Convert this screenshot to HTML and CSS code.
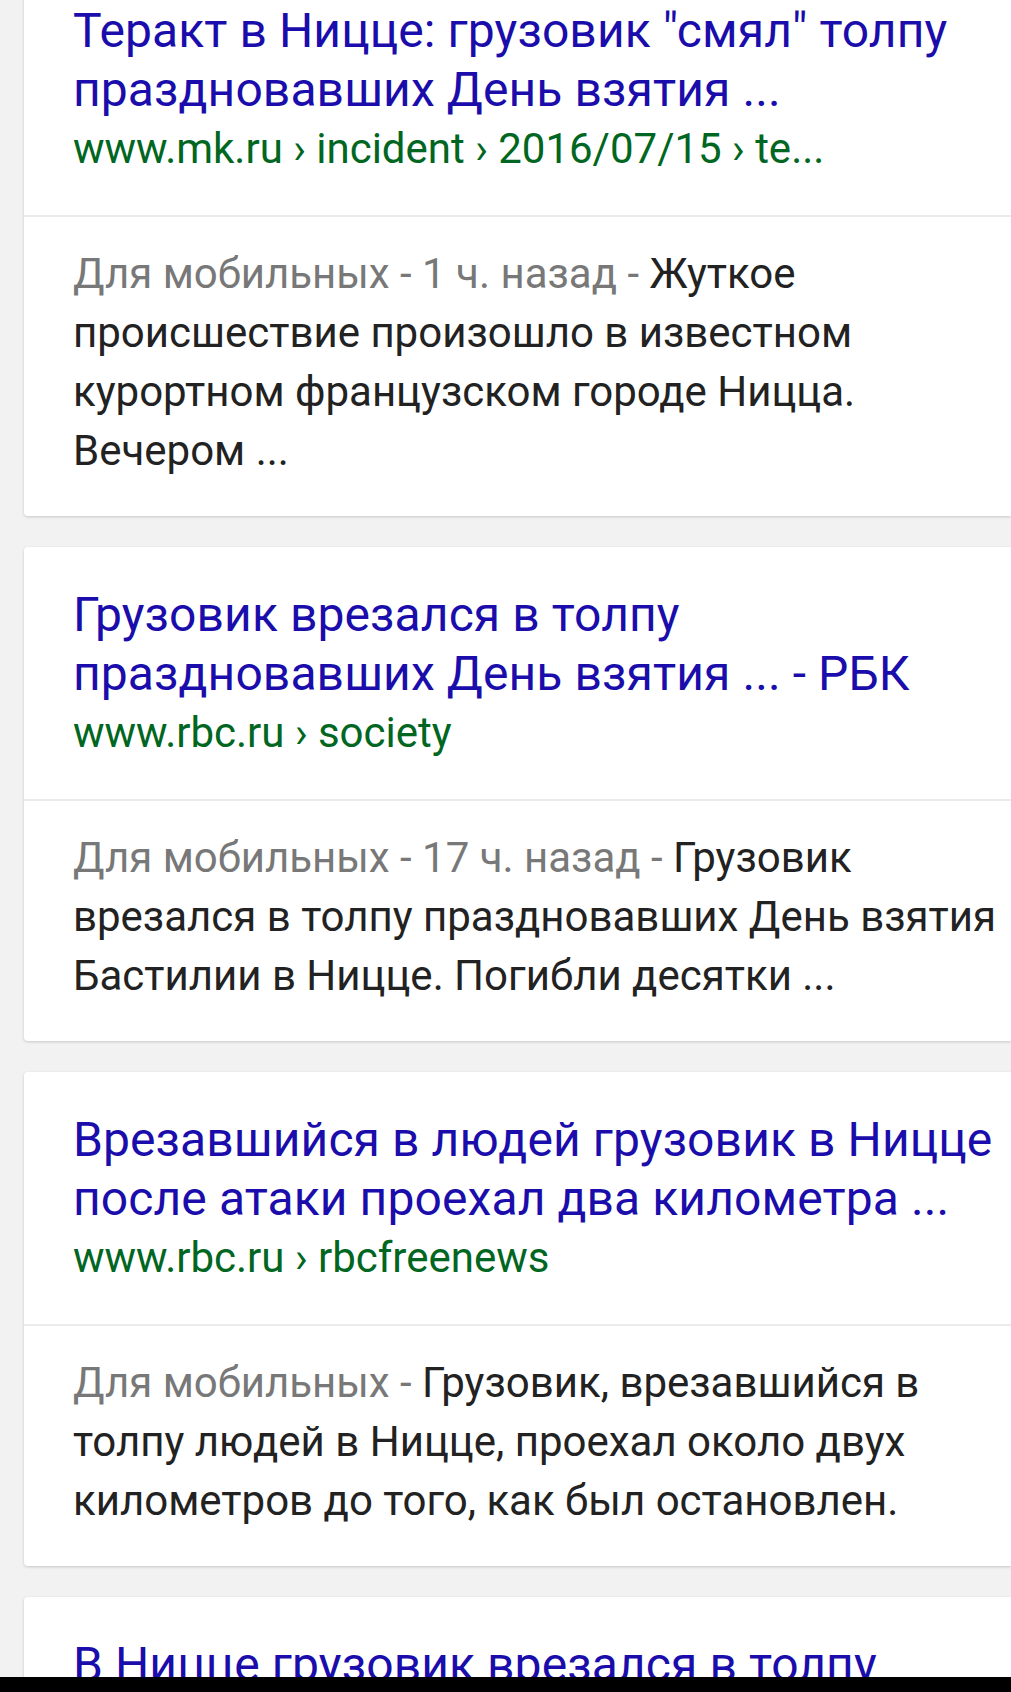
FILE: index.html
```html
<!DOCTYPE html>
<html lang="ru">
<head>
<meta charset="utf-8">
<title>Результаты поиска</title>
<link rel="stylesheet" href="styles.css">
</head>
<body>
<main class="results">
  <article class="card">
    <div class="head">
      <a class="title" href="#">Теракт в Ницце: грузовик "смял" толпу<br>праздновавших День взятия ...</a>
      <div class="url">www.mk.ru › incident › 2016/07/15 › te...</div>
    </div>
    <div class="snippet"><span class="meta">Для мобильных - 1 ч. назад - </span>Жуткое<br>происшествие произошло в известном<br>курортном французском городе Ницца.<br>Вечером ...</div>
  </article>

  <article class="card">
    <div class="head">
      <a class="title" href="#">Грузовик врезался в толпу<br>праздновавших День взятия ... - РБК</a>
      <div class="url">www.rbc.ru › society</div>
    </div>
    <div class="snippet"><span class="meta">Для мобильных - 17 ч. назад - </span>Грузовик<br>врезался в толпу праздновавших День взятия<br>Бастилии в Ницце. Погибли десятки ...</div>
  </article>

  <article class="card">
    <div class="head">
      <a class="title" href="#">Врезавшийся в людей грузовик в Ницце<br>после атаки проехал два километра ...</a>
      <div class="url">www.rbc.ru › rbcfreenews</div>
    </div>
    <div class="snippet"><span class="meta">Для мобильных - </span>Грузовик, врезавшийся в<br>толпу людей в Ницце, проехал около двух<br>километров до того, как был остановлен.</div>
  </article>

  <article class="card">
    <div class="head">
      <a class="title" href="#">В Ницце грузовик врезался в толпу</a>
    </div>
  </article>
</main>
<div class="navbar"></div>
</body>
</html>
```

FILE: styles.css
```css
html, body {
  margin: 0;
  padding: 0;
  background: #f2f2f2;
  font-family: Roboto, "Noto Sans", "Liberation Sans", sans-serif;
  overflow: hidden;
}

.results {
  display: flex;
  flex-direction: column;
  gap: 31px;
  margin-top: -37px;
  padding-left: 24px;
}

.card {
  background: #fff;
  border-radius: 4px 0 0 4px;
  box-shadow: 0 1px 3px rgba(0, 0, 0, 0.18);
}

.head {
  padding: 38px 0 37px 49px;
  line-height: 59px;
}

.title {
  display: block;
  color: #1a0dab;
  font-size: 48px;
  letter-spacing: 0.1px;
  text-decoration: none;
  white-space: nowrap;
}

.url {
  color: #006621;
  font-size: 42px;
  white-space: nowrap;
}

.snippet {
  border-top: 2px solid #ebebeb;
  padding: 27px 0 36px 49px;
  font-size: 42px;
  line-height: 59px;
  color: #222;
  white-space: nowrap;
}

.meta {
  color: #787878;
}

.navbar {
  position: fixed;
  left: 0;
  right: 0;
  bottom: 0;
  height: 15px;
  background: #000;
}
```
